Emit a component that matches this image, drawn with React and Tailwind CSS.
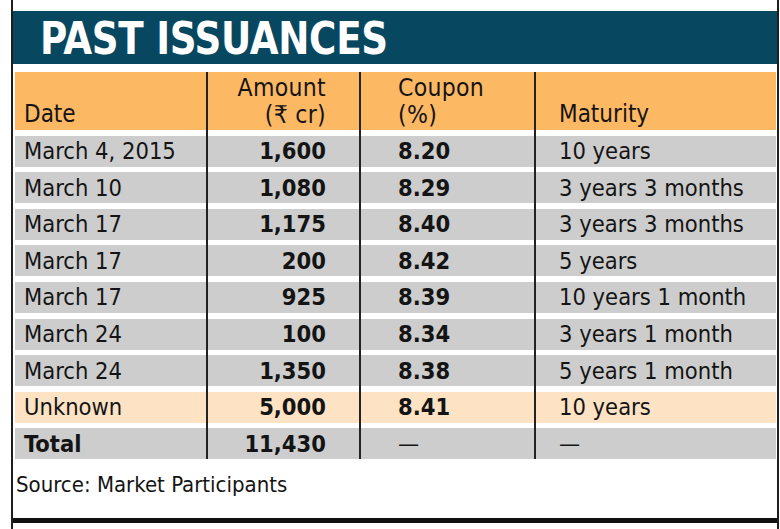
const ROWS = [
  { date: 'March 4, 2015', amount: '1,600', coupon: '8.20', maturity: '10 years' },
  { date: 'March 10', amount: '1,080', coupon: '8.29', maturity: '3 years 3 months' },
  { date: 'March 17', amount: '1,175', coupon: '8.40', maturity: '3 years 3 months' },
  { date: 'March 17', amount: '200', coupon: '8.42', maturity: '5 years' },
  { date: 'March 17', amount: '925', coupon: '8.39', maturity: '10 years 1 month' },
  { date: 'March 24', amount: '100', coupon: '8.34', maturity: '3 years 1 month' },
  { date: 'March 24', amount: '1,350', coupon: '8.38', maturity: '5 years 1 month' },
  { date: 'Unknown', amount: '5,000', coupon: '8.41', maturity: '10 years', highlight: true },
  { date: 'Total', amount: '11,430', coupon: '—', maturity: '—', total: true },
]

const body = "font-['DejaVu_Sans_Condensed','DejaVu_Sans',sans-serif] font-stretch-condensed"

function Row({ row }) {
  const bg = row.highlight ? 'bg-[#fde3c3]' : 'bg-[#cdcdcd]'
  const cell = `h-[31px] flex items-center ${bg}`
  return (
    <>
      <div className="border-r-2 border-[#222] pt-[5.6px]">
        <div className={`${cell} pl-[9px] ${row.total ? 'font-bold' : ''}`}>{row.date}</div>
      </div>
      <div className="border-r-2 border-[#222] pt-[5.6px]">
        <div className={`${cell} justify-end pr-[33px] font-bold`}>{row.amount}</div>
      </div>
      <div className="border-r-2 border-[#222] pt-[5.6px]">
        <div className={`${cell} pl-[37px] ${row.total ? '' : 'font-bold'}`}>{row.coupon}</div>
      </div>
      <div className="pt-[5.6px]">
        <div className={`${cell} pl-[23px]`}>{row.maturity}</div>
      </div>
    </>
  )
}

export default function App() {
  return (
    <div className="w-[780px] h-[529px] bg-white">
      <div className={`ml-[11px] w-[768px] h-full border-x-2 border-[#1e1e1e] flex flex-col text-[#141414] ${body}`}>
        <div className="h-[11px]" />

        {/* Title bar */}
        <div className="h-[53px] bg-[#07475f] flex items-center pl-[27px] overflow-hidden">
          <h1 className="text-white text-[45px] leading-none font-bold tracking-[-0.3px] scale-x-[0.92] origin-left whitespace-nowrap pt-[2px]">
            PAST ISSUANCES
          </h1>
        </div>

        <div className="h-[8px]" />

        {/* Table */}
        <div className="ml-[2px] mr-[1px] grid grid-cols-[193px_153px_175px_1fr] text-[23.5px] leading-[26px]">
          <div className="border-r-2 border-[#222] bg-[#fdb864] h-[58px] flex items-end pl-[9px] pb-[3px] text-[24px]">Date</div>
          <div className="border-r-2 border-[#222] bg-[#fdb864] h-[58px] flex flex-col items-end justify-end pr-[33px] pb-[2px] text-[24.5px] leading-[27px] tracking-[0.3px]">
            <span>Amount</span>
            <span>(₹ cr)</span>
          </div>
          <div className="border-r-2 border-[#222] bg-[#fdb864] h-[58px] flex flex-col justify-end pl-[37px] pb-[2px] text-[24.5px] leading-[27px] tracking-[0.3px]">
            <span>Coupon</span>
            <span>(%)</span>
          </div>
          <div className="bg-[#fdb864] h-[58px] flex items-end pl-[23px] pb-[3px] text-[24px]">Maturity</div>

          {ROWS.map((row, i) => <Row key={i} row={row} />)}
        </div>

        <p className="mt-[14px] pl-[3px] text-[22px] leading-[24px]">Source: Market Participants</p>

        <div className="mt-auto h-[5px] bg-[#111]" />
        <div className="h-[6px]" />
      </div>
    </div>
  )
}
